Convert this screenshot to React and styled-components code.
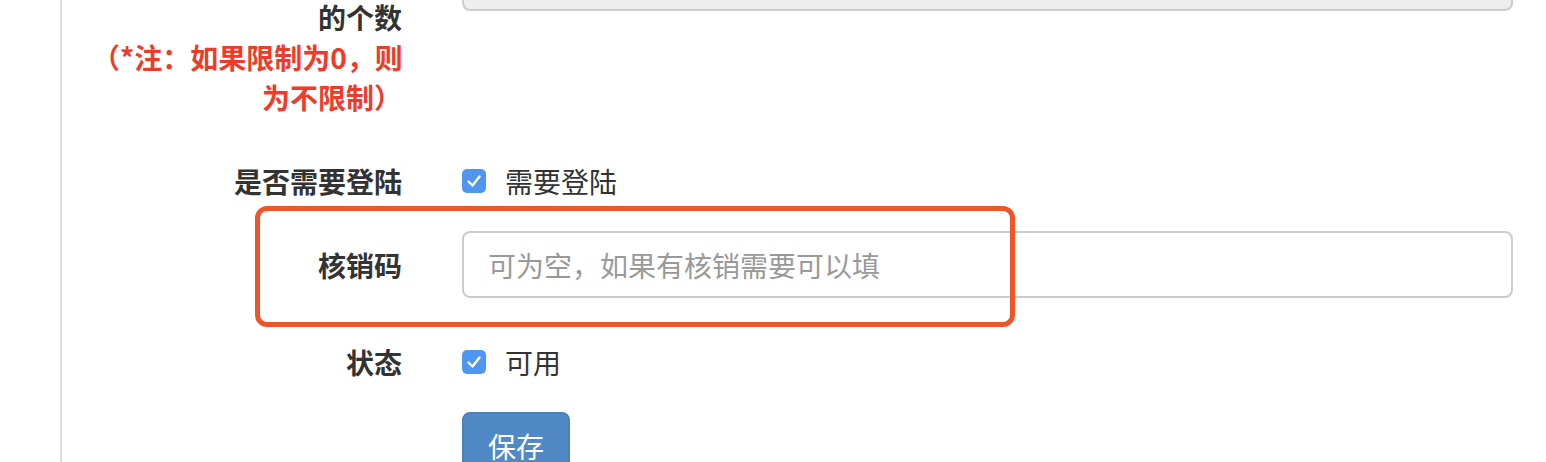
import React from 'react'
import styled, { createGlobalStyle } from 'styled-components'

const Global = createGlobalStyle`
  html, body { margin: 0; padding: 0; background: #fff; overflow: hidden; }
  body { font-family: "Noto Sans CJK SC", "Liberation Sans", sans-serif; color: #333; }
`
const Page = styled.div`
  height: 462px; overflow: hidden;
  margin-left: 60px; border-left: 2px solid #ddd;
`
const Form = styled.form`
  margin-top: -57px; padding-right: 33px;
`
const Row = styled.div`
  position: relative;
  display: grid; grid-template-columns: 370px 1fr;
  margin-bottom: 30px;
`
const Label = styled.label`
  padding: ${({ $top }) => $top || 14}px 30px 0 30px; text-align: right; white-space: nowrap;
  font-size: 28px; line-height: 40px; font-weight: bold; color: #333;
`
const Note = styled.span`
  display: block; color: #ee3b2a;
`
const Control = styled.div`
  padding-left: 30px; min-width: 0;
`
const Input = styled.input`
  box-sizing: border-box; display: block; width: 100%; height: ${({ $h }) => $h || 67}px;
  padding: 0 24px; font: inherit; font-size: 28px; color: #555;
  background: ${({ disabled }) => (disabled ? '#eee' : '#fff')};
  border: 2px solid #ccc; border-radius: 8px; outline: none;
  &::placeholder { color: #999; }
`
const Check = styled.label`
  display: flex; align-items: center; gap: 19px;
  padding-top: 14px; min-height: 40px;
  font-size: 28px; line-height: 40px; color: #333;
`
const Box = styled.span`
  width: 24px; height: 24px; border-radius: 5px; background: #4f95f2;
  display: flex; align-items: center; justify-content: center; flex: 0 0 auto;
`
const Button = styled.button`
  box-sizing: border-box; height: 68px; padding: 0 24px;
  font: inherit; font-size: 28px; line-height: 40px; color: #fff;
  background: #5089c6; border: 2px solid #4a80bb; border-radius: 8px;
`
const Highlight = styled.div`
  position: absolute; left: 193px; top: -25px; width: 760px; height: 121px;
  box-sizing: border-box; border: 5px solid #f0552a; border-radius: 12px;
  pointer-events: none;
`

const Tick = () => (
  <Box>
    <svg width="24" height="24" viewBox="0 0 24 24">
      <path d="M6.5 12.5 L10.5 16.5 L17.5 7.5" fill="none" stroke="#fff" strokeWidth="2.4" strokeLinecap="round" strokeLinejoin="round" />
    </svg>
  </Box>
)

export default function App() {
  return (
    <>
      <Global />
      <Page>
        <Form>
          <Row>
            <Label $top={54}>
              的个数
              <Note>（*注：如果限制为0，则<br />为不限制）</Note>
            </Label>
            <Control><Input $h={68} disabled value="" readOnly /></Control>
          </Row>
          <Row>
            <Label>是否需要登陆</Label>
            <Control><Check><Tick />需要登陆</Check></Control>
          </Row>
          <Row>
            <Label>核销码</Label>
            <Control><Input placeholder="可为空，如果有核销需要可以填" /></Control>
            <Highlight />
          </Row>
          <Row>
            <Label>状态</Label>
            <Control><Check><Tick />可用</Check></Control>
          </Row>
          <Row>
            <div />
            <Control><Button type="button">保存</Button></Control>
          </Row>
        </Form>
      </Page>
    </>
  )
}
